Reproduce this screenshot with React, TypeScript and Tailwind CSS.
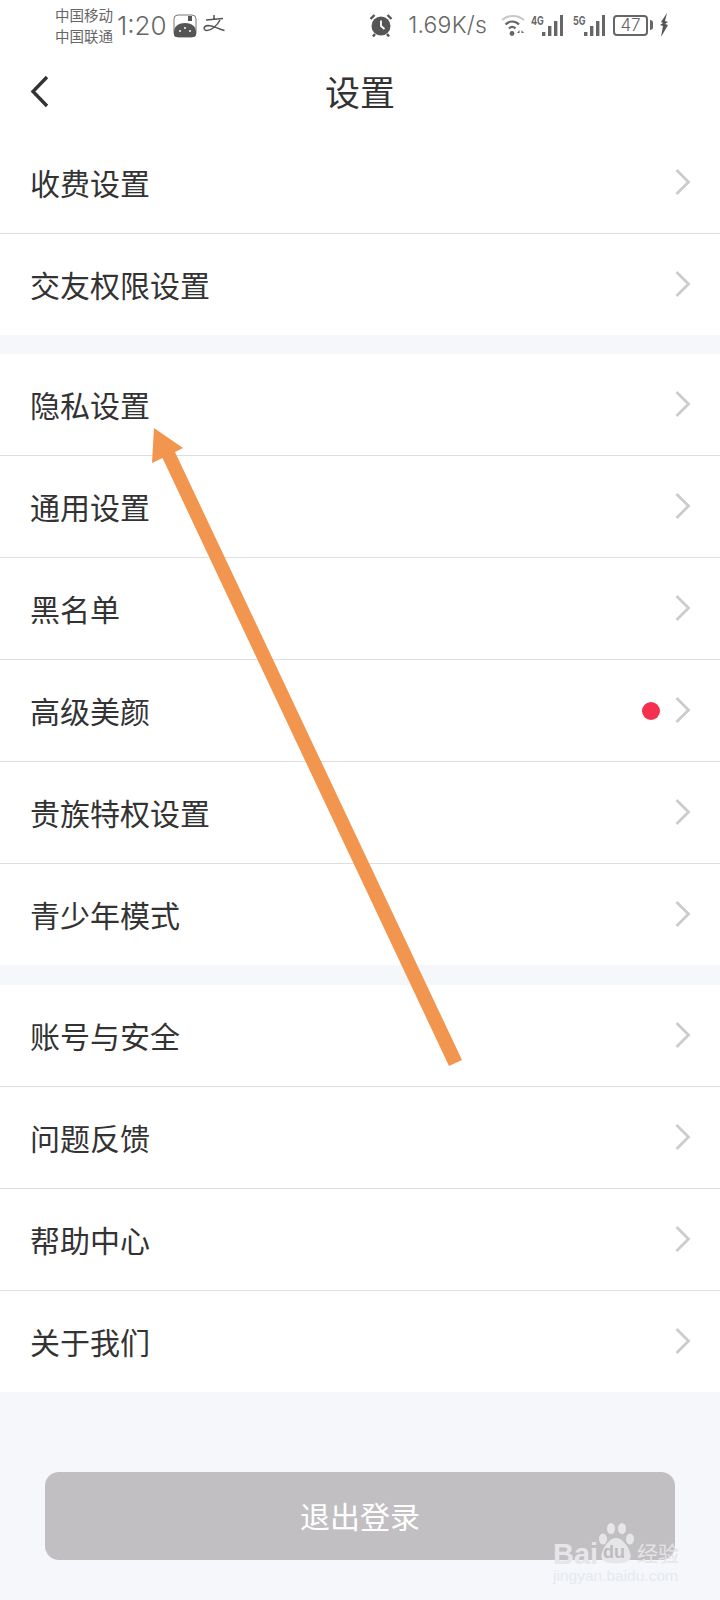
const cjk = "font-['Inter','Noto_Sans_CJK_SC',sans-serif]";

function Chevron() {
  return (
    <svg width="18" height="28" viewBox="0 0 18 28" fill="none" className="-mt-[1px] block">
      <path d="M2.5 2 L14.5 14 L2.5 26" stroke="#cccccc" strokeWidth="2.8" />
    </svg>
  );
}

function Row({ label, dot, last }: { label: string; dot?: boolean; last?: boolean }) {
  return (
    <div className={`flex items-center pl-[30px] pr-[28px] bg-white ${last ? "h-[101px]" : "h-[102px] border-b border-[#dfdfdf]"}`}>
      <span className="mt-[2px] flex-1 text-[30px] leading-none text-[#333333]">{label}</span>
      {dot && <span className="mr-[14px] h-[18px] w-[18px] rounded-full bg-[#f5304f]" />}
      <Chevron />
    </div>
  );
}

function Bars() {
  return (
    <svg width="21" height="21" viewBox="0 0 21 21" fill="#666">
      <rect x="0" y="17" width="3.4" height="4" />
      <rect x="6" y="11" width="3.4" height="10" />
      <rect x="12" y="6" width="3.4" height="15" />
      <rect x="18" y="0" width="3" height="21" />
    </svg>
  );
}

function Net({ label }: { label: string }) {
  return (
    <div className="flex h-[21px] items-start">
      <span className="w-[11px] origin-left scale-x-75 text-[12px] leading-[11px] font-bold whitespace-nowrap">{label}</span>
      <Bars />
    </div>
  );
}

export default function App() {
  return (
    <div className={`relative flex h-[1600px] w-[720px] flex-col overflow-hidden bg-[#f5f7fb] ${cjk}`}>
      <div className="flex h-[50px] items-center bg-white pl-[55px] pr-[52px] text-[#666666]">
        <div className="mt-[2px] flex w-[60px] flex-col text-[14.5px] leading-[21px] whitespace-nowrap">
          <span>中国移动</span>
          <span>中国联通</span>
        </div>
        <span className="ml-[2px] mt-[2px] text-[26px] leading-none font-light">1:20</span>
        <svg width="24" height="24" viewBox="0 0 24 24" className="ml-[6px] mt-[1px]">
          <rect x="1" y="1" width="22" height="22" rx="4" fill="#fff" stroke="#777" strokeWidth="1" />
          <rect x="15" y="2" width="4" height="5" fill="#555" />
          <path d="M1 20 V18 C1 12 6 9 12 9 C18 9 23 12 23 18 V20 C23 22 22 23 20 23 H4 C2 23 1 22 1 20 Z" fill="#555" />
          <circle cx="7" cy="17" r="1" fill="#fff" />
          <circle cx="12" cy="14" r="1" fill="#fff" />
          <circle cx="17" cy="17" r="1" fill="#fff" />
        </svg>
        <svg width="22" height="18" viewBox="0 0 22 18" fill="none" stroke="#555" strokeWidth="1.5" className="ml-[6px] mt-[-2px]">
          <path d="M3 5 L20 3.5 M11 0 V4.5 M17 5 C14 11 8 15.5 4 15.5 C0 15.5 0 11 5 10.5 C10 10.5 15 14 21.5 15.5" />
        </svg>
        <div className="flex-1" />
        <svg width="24" height="24" viewBox="0 0 24 24" className="mr-[15px]">
          <circle cx="12" cy="13" r="9.5" fill="#555" />
          <path d="M12 7.5 V13 L15.5 16" stroke="#fff" strokeWidth="1.8" fill="none" />
          <path d="M1.5 6 L5.5 2 M22.5 6 L18.5 2 M6 21 L4 23.5 M18 21 L20 23.5" stroke="#555" strokeWidth="2.4" />
        </svg>
        <span className="text-[23px] leading-none font-light tracking-[0.2px]">1.69K/s</span>
        <svg width="24" height="23" viewBox="0 0 24 23" fill="none" className="ml-[14px]">
          <path d="M1 6 C7 0.5 17 0.5 23 6" stroke="#c8c8c8" strokeWidth="2" />
          <path d="M4.5 10.5 C8.5 6.5 14 6.5 18 10.5" stroke="#666" strokeWidth="2.2" />
          <path d="M8 14.5 C10 12.5 12.5 12.5 14.5 14.5" stroke="#666" strokeWidth="2.2" />
          <circle cx="11" cy="19.5" r="2.4" fill="#666" />
          <path d="M18.5 16 L16 19 H18.5 Z M20.5 16 L23 19 H20.5 Z" fill="#666" />
        </svg>
        <div className="ml-[6px]"><Net label="4G" /></div>
        <div className="ml-[10px]"><Net label="5G" /></div>
        <div className="ml-[8px] flex h-[21px] w-[35px] items-center justify-center rounded-[4px] border-2 border-[#666666] text-[17px] leading-none font-light">
          47
        </div>
        <span className="ml-[2px] h-[10px] w-[3px] rounded-r-sm bg-[#666666]" />
        <svg width="8" height="24" viewBox="0 0 8 24" fill="#555" className="ml-[7px]">
          <path d="M7 0 L1 9 L3 10 L0 12 L3 13 L1 24 L8 12 L5 11 L8 9 L5 8 Z" />
        </svg>
      </div>

      <div className="flex h-[82px] items-center bg-white pl-[30px] pr-[30px]">
        <svg width="20" height="33" viewBox="0 0 20 33" fill="none">
          <path d="M17 2 L3 16.5 L17 31" stroke="#333" strokeWidth="3.4" />
        </svg>
        <span className="ml-[275px] mt-[5px] text-[35px] leading-none text-[#333333]">设置</span>
      </div>

      <Row label="收费设置" />
      <Row label="交友权限设置" last />
      <div className="h-[19px]" />
      <Row label="隐私设置" />
      <Row label="通用设置" />
      <Row label="黑名单" />
      <Row label="高级美颜" dot />
      <Row label="贵族特权设置" />
      <Row label="青少年模式" last />
      <div className="h-[20px]" />
      <Row label="账号与安全" />
      <Row label="问题反馈" />
      <Row label="帮助中心" />
      <Row label="关于我们" last />

      <div className="mx-[45px] mt-[80px] flex h-[88px] w-[630px] items-center justify-center rounded-[14px] bg-[#c1bfc2] pt-[2px] text-[30px] leading-none text-white">
        退出登录
      </div>

      <svg width="720" height="1600" viewBox="0 0 720 1600" className="pointer-events-none absolute left-0 top-0">
        <polygon points="154,428 183,448 175,452 462,1060 449,1066 162.5,458 152,463" fill="#f2954e" />
      </svg>

      <div className="pointer-events-none absolute left-[553px] top-[1523px] flex w-[130px] flex-col items-start">
        <div className="flex h-[41px] items-end">
          <span className="mb-[-5px] w-[44px] font-['Liberation_Sans',sans-serif] text-[29px] leading-[29px] font-bold text-[#e6e6e8]">Bai</span>
          <div className="relative h-[41px] w-[38px]">
            <svg width="38" height="41" viewBox="0 0 38 41" className="block">
              <ellipse cx="6" cy="16" rx="4" ry="5.5" fill="#e6e6e8" />
              <ellipse cx="14" cy="5.5" rx="4" ry="5.5" fill="#e6e6e8" />
              <ellipse cx="25" cy="5.5" rx="4" ry="5.5" fill="#e6e6e8" />
              <ellipse cx="33" cy="16" rx="4" ry="5.5" fill="#e6e6e8" />
              <path d="M19 15 C27 15 36 30 33 36 C30 42 8 42 5 36 C2 30 11 15 19 15 Z" fill="#e6e6e8" />
            </svg>
            <span className="absolute bottom-[3px] left-[6px] font-['Liberation_Sans',sans-serif] text-[18px] leading-[18px] font-bold text-[#bdbbbe]">du</span>
          </div>
          <span className="ml-[2px] text-[21px] leading-[21px] text-[#e4e4e6]">经验</span>
        </div>
        <span className="mt-[4px] font-['Liberation_Sans',sans-serif] text-[15.5px] leading-[16px] whitespace-nowrap text-[#e6e9ee]">jingyan.baidu.com</span>
      </div>
    </div>
  );
}
